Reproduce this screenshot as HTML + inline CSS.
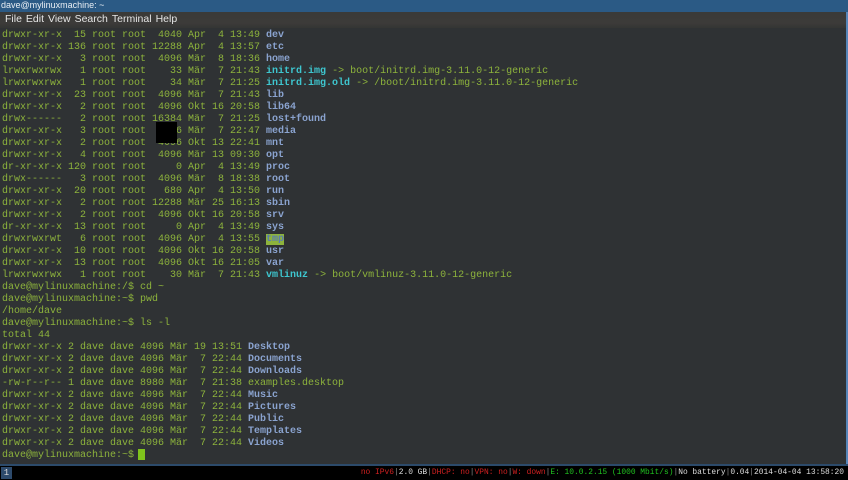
<!DOCTYPE html>
<html><head><meta charset="utf-8"><style>
*{margin:0;padding:0;box-sizing:border-box}
body{width:848px;height:480px;overflow:hidden;background:#2f3234;position:relative;font-family:"Liberation Mono",monospace}
#title{position:absolute;left:0;top:0;width:848px;height:12px;background:#2b5a85;color:#e8eef4;font:9px/11px "Liberation Sans",sans-serif;padding-left:1px}
#menu{position:absolute;left:0;top:12px;width:846px;height:16px;background:linear-gradient(#3a3a38,#3c3b39 70%,#343534);color:#e6e6e6;font:10.5px/15px "Liberation Sans",sans-serif;padding-left:5px;word-spacing:1px}
#menu span{margin-right:4px}
#rb{position:absolute;right:0;top:12px;width:2px;height:452px;background:#5685b8}
#term{position:absolute;left:2px;top:30px;font-size:10px;line-height:12px;color:#8db33c;white-space:pre}
.d{color:#8aa3cf;font-weight:bold}
.l{color:#3ec6cf;font-weight:bold}
.t{background:#8db33c;color:#5a7cb0;font-weight:bold}
#sq{position:absolute;left:156px;top:122px;width:21px;height:21px;background:#000}
#cur{position:absolute;left:138px;top:449px;width:7px;height:11px;background:#7fc31c}
#bline{position:absolute;left:0;top:464px;width:848px;height:2px;background:#2c4a6a}
#bar{position:absolute;left:0;top:466px;width:848px;height:14px;background:#000;font-size:7.9px;line-height:14px;color:#ddd;white-space:pre}
#ws{position:absolute;left:1px;top:1px;width:11px;height:12px;background:#2d4a6b;color:#ddd;text-align:center;line-height:12px;font-size:9px}
#st{position:absolute;right:4px;top:0}
.r{color:#d02020}.g{color:#20c020}.s{color:#888}
</style></head><body>
<div id="title">dave@mylinuxmachine: ~</div>
<div id="menu"><span>File</span><span>Edit</span><span>View</span><span>Search</span><span>Terminal</span><span>Help</span></div>
<div id="rb"></div>
<div id="term">drwxr-xr-x  15 root root  4040 Apr  4 13:49 <span class="d">dev</span>
drwxr-xr-x 136 root root 12288 Apr  4 13:57 <span class="d">etc</span>
drwxr-xr-x   3 root root  4096 Mär  8 18:36 <span class="d">home</span>
lrwxrwxrwx   1 root root    33 Mär  7 21:43 <span class="l">initrd.img</span> -&gt; boot/initrd.img-3.11.0-12-generic
lrwxrwxrwx   1 root root    34 Mär  7 21:25 <span class="l">initrd.img.old</span> -&gt; /boot/initrd.img-3.11.0-12-generic
drwxr-xr-x  23 root root  4096 Mär  7 21:43 <span class="d">lib</span>
drwxr-xr-x   2 root root  4096 Okt 16 20:58 <span class="d">lib64</span>
drwx------   2 root root 16384 Mär  7 21:25 <span class="d">lost+found</span>
drwxr-xr-x   3 root root  4096 Mär  7 22:47 <span class="d">media</span>
drwxr-xr-x   2 root root  4096 Okt 13 22:41 <span class="d">mnt</span>
drwxr-xr-x   4 root root  4096 Mär 13 09:30 <span class="d">opt</span>
dr-xr-xr-x 120 root root     0 Apr  4 13:49 <span class="d">proc</span>
drwx------   3 root root  4096 Mär  8 18:38 <span class="d">root</span>
drwxr-xr-x  20 root root   680 Apr  4 13:50 <span class="d">run</span>
drwxr-xr-x   2 root root 12288 Mär 25 16:13 <span class="d">sbin</span>
drwxr-xr-x   2 root root  4096 Okt 16 20:58 <span class="d">srv</span>
dr-xr-xr-x  13 root root     0 Apr  4 13:49 <span class="d">sys</span>
drwxrwxrwt   6 root root  4096 Apr  4 13:55 <span class="t">tmp</span>
drwxr-xr-x  10 root root  4096 Okt 16 20:58 <span class="d">usr</span>
drwxr-xr-x  13 root root  4096 Okt 16 21:05 <span class="d">var</span>
lrwxrwxrwx   1 root root    30 Mär  7 21:43 <span class="l">vmlinuz</span> -&gt; boot/vmlinuz-3.11.0-12-generic
dave@mylinuxmachine:/$ cd ~
dave@mylinuxmachine:~$ pwd
/home/dave
dave@mylinuxmachine:~$ ls -l
total 44
drwxr-xr-x 2 dave dave 4096 Mär 19 13:51 <span class="d">Desktop</span>
drwxr-xr-x 2 dave dave 4096 Mär  7 22:44 <span class="d">Documents</span>
drwxr-xr-x 2 dave dave 4096 Mär  7 22:44 <span class="d">Downloads</span>
-rw-r--r-- 1 dave dave 8980 Mär  7 21:38 examples.desktop
drwxr-xr-x 2 dave dave 4096 Mär  7 22:44 <span class="d">Music</span>
drwxr-xr-x 2 dave dave 4096 Mär  7 22:44 <span class="d">Pictures</span>
drwxr-xr-x 2 dave dave 4096 Mär  7 22:44 <span class="d">Public</span>
drwxr-xr-x 2 dave dave 4096 Mär  7 22:44 <span class="d">Templates</span>
drwxr-xr-x 2 dave dave 4096 Mär  7 22:44 <span class="d">Videos</span>
dave@mylinuxmachine:~$ </div>
<div id="sq"></div>
<div id="cur"></div>
<div id="bline"></div>
<div id="bar"><div id="ws">1</div><div id="st"><span class="r">no IPv6</span><span class="s">|</span>2.0 GB<span class="s">|</span><span class="r">DHCP: no</span><span class="s">|</span><span class="r">VPN: no</span><span class="s">|</span><span class="r">W: down</span><span class="s">|</span><span class="g">E: 10.0.2.15 (1000 Mbit/s)</span><span class="s">|</span>No battery<span class="s">|</span>0.04<span class="s">|</span>2014-04-04 13:58:20</div></div>
</body></html>
